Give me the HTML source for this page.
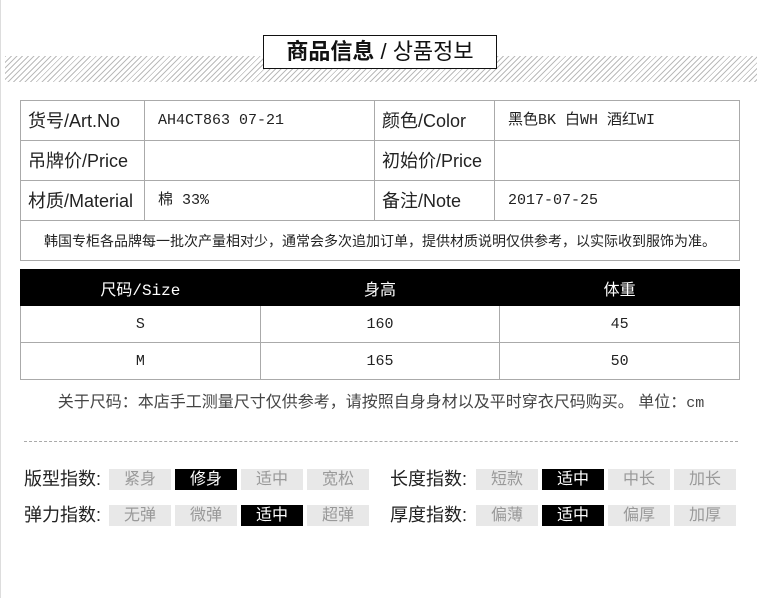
<!DOCTYPE html>
<html><head><meta charset="utf-8"><style>
*{margin:0;padding:0;box-sizing:border-box}
body{width:762px;height:598px;background:#fff;position:relative;overflow:hidden;font-family:"Liberation Sans","Noto Sans CJK SC",sans-serif;color:#333}
.edge{position:absolute;left:0;top:0;width:1px;height:598px;background:#ddd}
.hatch{position:absolute;left:5px;top:56px;width:752px;height:26px;background:repeating-linear-gradient(135deg,#bbb 0 1px,#fff 1px 4px)}
.title{position:absolute;left:263px;top:35px;width:234px;height:34px;border:1.5px solid #111;background:#fff;text-align:center;line-height:31px;font-size:22px;color:#111}
.title b{font-weight:bold}
.title span{font-family:"Liberation Sans","Noto Sans CJK KR",sans-serif}
table{border-collapse:collapse;position:absolute}
.t1{left:20px;top:100px;width:720px}
.t1 td{border:1px solid #aaa;height:40px;font-size:18px;line-height:20px;padding-left:7px;color:#222;vertical-align:middle}
.t1 td.v{padding-left:13px;font-size:15px;font-family:"Liberation Mono","Noto Sans CJK SC",monospace}
.t1 td.n{font-size:14px;text-align:center;padding:0;height:40px}
.t2{left:20px;top:269px;width:720px}
.t2 td{border:1px solid #aaa;text-align:center;font-size:15px;height:37px;width:240px;color:#222;font-family:"Liberation Mono","Noto Sans CJK SC",monospace}
.t2 tr.h td{background:#000;color:#fff;height:36px;border-color:#000;font-size:16px}
.note{position:absolute;left:0;width:762px;top:388px;text-align:center;font-size:16px;color:#444}
.note i{font-style:normal;font-family:"Liberation Mono",monospace;font-size:15px}
.dash{position:absolute;left:24px;top:441px;width:714px;border-top:1px dashed #aaa}
.lab{position:absolute;font-size:18px;color:#222;line-height:20px}
.c{position:absolute;width:62px;height:21px;background:#e8e8e8;color:#999;font-size:16px;text-align:center;line-height:21px}
.c.on{background:#000;color:#fff}
</style></head><body>
<div class="edge"></div>
<div class="hatch"></div>
<div class="title"><b>商品信息</b> / <span>상품정보</span></div>
<table class="t1">
<tr><td style="width:124px">货号/Art.No</td><td class="v" style="width:230px">AH4CT863 07-21</td><td style="width:120px">颜色/Color</td><td class="v">黑色BK 白WH 酒红WI</td></tr>
<tr><td>吊牌价/Price</td><td class="v"></td><td>初始价/Price</td><td class="v"></td></tr>
<tr><td>材质/Material</td><td class="v">棉 33%</td><td>备注/Note</td><td class="v">2017-07-25</td></tr>
<tr><td colspan="4" class="n">韩国专柜各品牌每一批次产量相对少，通常会多次追加订单，提供材质说明仅供参考，以实际收到服饰为准。</td></tr>
</table>
<table class="t2">
<tr class="h"><td>尺码/Size</td><td>身高</td><td>体重</td></tr>
<tr><td>S</td><td>160</td><td>45</td></tr>
<tr><td>M</td><td>165</td><td>50</td></tr>
</table>
<div class="note">关于尺码：本店手工测量尺寸仅供参考，请按照自身身材以及平时穿衣尺码购买。 单位：<i>cm</i></div>
<div class="dash"></div>
<div class="lab" style="left:24px;top:469px">版型指数:</div>
<div class="c" style="left:109px;top:469px">紧身</div><div class="c on" style="left:175px;top:469px">修身</div><div class="c" style="left:241px;top:469px">适中</div><div class="c" style="left:307px;top:469px">宽松</div>
<div class="lab" style="left:390px;top:469px">长度指数:</div>
<div class="c" style="left:476px;top:469px">短款</div><div class="c on" style="left:542px;top:469px">适中</div><div class="c" style="left:608px;top:469px">中长</div><div class="c" style="left:674px;top:469px">加长</div>
<div class="lab" style="left:24px;top:505px">弹力指数:</div>
<div class="c" style="left:109px;top:505px">无弹</div><div class="c" style="left:175px;top:505px">微弹</div><div class="c on" style="left:241px;top:505px">适中</div><div class="c" style="left:307px;top:505px">超弹</div>
<div class="lab" style="left:390px;top:505px">厚度指数:</div>
<div class="c" style="left:476px;top:505px">偏薄</div><div class="c on" style="left:542px;top:505px">适中</div><div class="c" style="left:608px;top:505px">偏厚</div><div class="c" style="left:674px;top:505px">加厚</div>
</body></html>
